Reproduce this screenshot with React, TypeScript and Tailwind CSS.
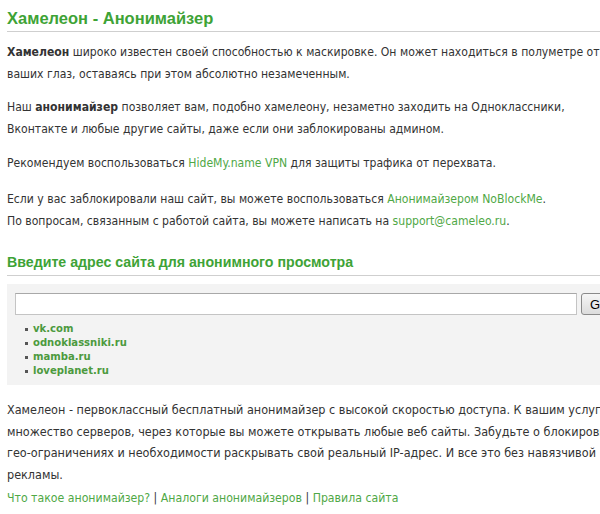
import React from 'react';

const body = { fontFamily: '"DejaVu Sans Condensed", "DejaVu Sans", Verdana, sans-serif', fontStretch: 'condensed' };
const head = { fontFamily: '"Liberation Sans", Arial, sans-serif' };

const sites = ['vk.com', 'odnoklassniki.ru', 'mamba.ru', 'loveplanet.ru'];

const A = ({ children }: { children: React.ReactNode }) => (
  <a href="#" className="text-[#4fa846] no-underline">
    {children}
  </a>
);

export default function App() {
  return (
    <div className="w-[600px] h-[514px] overflow-hidden bg-white">
      <div className="w-[640px] pl-[7px] pt-[8px] text-[12.1px] leading-[22px] text-[#333] whitespace-nowrap" style={body}>
        <h1
          className="text-[16.5px] leading-[20px] font-bold text-[#3ea336] pb-[3px] border-b border-[#cfcfcf]"
          style={head}
        >
          Хамелеон - Анонимайзер
        </h1>

        <p className="mt-[9px] mb-[11px]">
          <b>Хамелеон</b> широко известен своей способностью к маскировке. Он может находиться в полуметре от
          <br />
          ваших глаз, оставаясь при этом абсолютно незамеченным.
        </p>
        <p className="mb-[12px]">
          Наш <b>анонимайзер</b> позволяет вам, подобно хамелеону, незаметно заходить на Одноклассники,
          <br />
          Вконтакте и любые другие сайты, даже если они заблокированы админом.
        </p>
        <p className="mb-[14px]">
          Рекомендуем воспользоваться <A>HideMy.name VPN</A> для защиты трафика от перехвата.
        </p>
        <p className="mb-[20px]">
          Если у вас заблокировали наш сайт, вы можете воспользоваться <A>Анонимайзером NoBlockMe</A>.
          <br />
          По вопросам, связанным с работой сайта, вы можете написать на <A>support@cameleo.ru</A>.
        </p>

        <h2
          className="text-[14.2px] leading-[20px] font-bold text-[#3ea336] pb-[3px] border-b border-[#cfcfcf]"
          style={head}
        >
          Введите адрес сайта для анонимного просмотра
        </h2>

        <div className="mt-[8px] bg-[#f3f3f3] pt-[9px] pb-[7px] pl-[8px]">
          <div className="flex items-center gap-[4px]">
            <input
              type="text"
              className="w-[562px] h-[22px] bg-white border border-[#c4c4c4] border-t-[#a8a8a8] outline-none"
            />
            <button
              className="h-[22px] px-[8px] text-[13px] text-black border border-[#8a8a8a] rounded-[3px] bg-gradient-to-b from-[#f6f6f6] to-[#dcdcdc]"
              style={head}
            >
              Go
            </button>
          </div>
          <ul className="mt-[7px] pl-[10px] leading-[14px]">
            {sites.map((s) => (
              <li key={s} className="flex items-center">
                <span className="w-[3px] h-[3px] bg-[#555] mr-[5px]" />
                <a href="#" className="text-[#4c9a3e] font-bold text-[11.2px]">
                  {s}
                </a>
              </li>
            ))}
          </ul>
        </div>

        <p className="mt-[14px] text-[12.5px] leading-[21.7px]">
          Хамелеон - первоклассный бесплатный анонимайзер с высокой скоростью доступа. К вашим услугам
          <br />
          множество серверов, через которые вы можете открывать любые веб сайты. Забудьте о блокировках,
          <br />
          гео-ограничениях и необходимости раскрывать свой реальный IP-адрес. И все это без навязчивой
          <br />
          рекламы.
        </p>
        <p className="mt-[1px] text-[12.2px] leading-[22px]">
          <A>Что такое анонимайзер?</A> | <A>Аналоги анонимайзеров</A> | <A>Правила сайта</A>
        </p>
      </div>
    </div>
  );
}
